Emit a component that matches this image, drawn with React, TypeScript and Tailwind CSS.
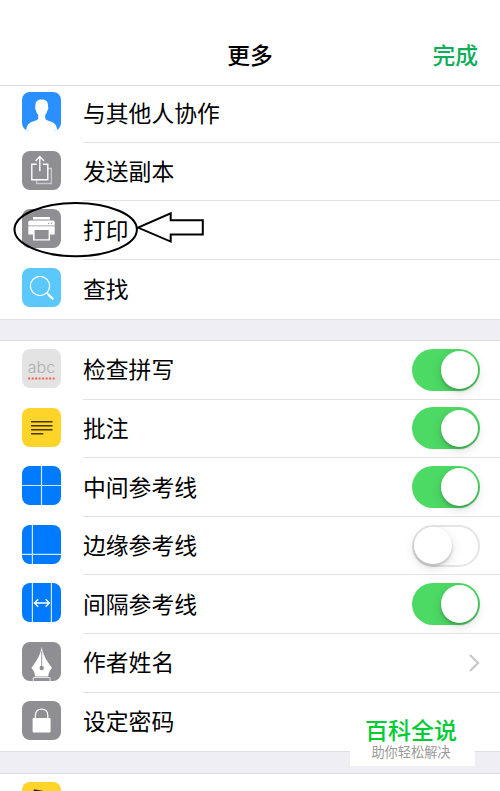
import { ReactNode } from "react";
import clsx from "clsx";

type Item = {
  label: string;
  icon: ReactNode;
  toggle?: boolean;
  chevron?: boolean;
};

function Icon({ className, children }: { className: string; children: ReactNode }) {
  return (
    <svg
      viewBox="0 0 39 39"
      fill="none"
      className={clsx("mb-[3.5px] h-[39px] w-[39px] shrink-0 rounded-[8px]", className)}
    >
      {children}
    </svg>
  );
}

const actions: Item[] = [
  {
    label: "与其他人协作",
    icon: (
      <Icon className="bg-[#2a90ff]">
        <path
          d="M4 39.5C4.6 33 6.5 31 11 29.6C14 28.6 16.2 27.8 16.2 26V22.8C14.6 21.4 14.3 19.8 14 18.2C12.8 17.6 13.1 15.5 13.4 14.5C13.2 10 15 7.6 19.7 7.6C24.4 7.6 26.2 10 26 14.5C26.4 15.5 26.6 17.6 25.4 18.2C25.1 19.8 24.8 21.4 23.2 22.8V26C23.2 27.8 25.4 28.6 28.4 29.6C32.9 31 34.8 33 35.4 39.5Z"
          fill="white"
        />
        <path d="M0 36.5L4.5 39H0ZM39 36.5L34.9 39H39Z" fill="white" />
      </Icon>
    ),
  },
  {
    label: "发送副本",
    icon: (
      <Icon className="bg-[#8e8e93]">
        <path d="M26 17.5H29.4V32.5H14.6V29" stroke="#c9c9cc" strokeWidth="1.3" />
        <path
          d="M14.8 13.2H9.8V28.8H25.8V13.2H20.8M17.8 20.2V5.8M13.6 10L17.8 5.6L22 10"
          stroke="white"
          strokeWidth="1.4"
        />
      </Icon>
    ),
  },
  {
    label: "打印",
    icon: (
      <Icon className="bg-[#8e8e93]">
        <path d="M11 8H28V10.4H11Z" fill="white" />
        <path
          d="M8 11.6H31Q32.7 11.6 32.7 13.3V16.6H6.3V13.3Q6.3 11.6 8 11.6Z"
          fill="white"
        />
        <path d="M6.3 17.3H32.7V25.6H28V31.6H11V25.6H6.3Z" fill="white" />
        <path d="M12.6 21H26.6V30.2H12.6Z" fill="#8e8e93" />
        <path d="M26 14.3H27.2M28.8 14.3H30" stroke="#8e8e93" />
      </Icon>
    ),
  },
  {
    label: "查找",
    icon: (
      <Icon className="bg-[#5ac8fa]">
        <circle cx="18" cy="18" r="9.6" stroke="white" strokeWidth="1.2" />
        <path d="M24.8 24.8L26.4 26.4" stroke="white" strokeWidth="1.2" />
        <path d="M25.8 26L31.2 31.4" stroke="white" strokeWidth="2.3" />
      </Icon>
    ),
  },
];

const settings: Item[] = [
  {
    label: "检查拼写",
    toggle: true,
    icon: (
      <Icon className="bg-[#e3e3e3]">
        <text
          x="19.5"
          y="23.5"
          textAnchor="middle"
          className="fill-[#adadad] font-['Inter','Liberation_Sans',sans-serif] text-[16px] font-light"
        >
          abc
        </text>
        <path d="M6.2 29.5H33" stroke="#ff5540" strokeWidth="2" strokeDasharray="1.9 1.6" />
      </Icon>
    ),
  },
  {
    label: "批注",
    toggle: true,
    icon: (
      <Icon className="bg-[#ffd428]">
        <path
          d="M9 13.8H30.5M9 17.8H30.5M9 21.8H30.5M9 25.8H21.3"
          stroke="#43390b"
          strokeWidth="1.5"
        />
      </Icon>
    ),
  },
  {
    label: "中间参考线",
    toggle: true,
    icon: (
      <Icon className="bg-[#007aff]">
        <path d="M19.5 0V39M0 19.5H39" stroke="#d3e7ff" strokeWidth="1.2" />
      </Icon>
    ),
  },
  {
    label: "边缘参考线",
    toggle: false,
    icon: (
      <Icon className="bg-[#007aff]">
        <path d="M10.4 0V39M0 29.4H39" stroke="#d3e7ff" strokeWidth="1.2" />
      </Icon>
    ),
  },
  {
    label: "间隔参考线",
    toggle: true,
    icon: (
      <Icon className="bg-[#007aff]">
        <path d="M10.4 0V39M29.4 0V39" stroke="#d3e7ff" strokeWidth="1.2" />
        <path
          d="M12.6 20H27.2M16.2 16.2L12.4 20L16.2 23.8M23.6 16.2L27.4 20L23.6 23.8"
          stroke="white"
          strokeWidth="1.3"
        />
      </Icon>
    ),
  },
  {
    label: "作者姓名",
    chevron: true,
    icon: (
      <Icon className="bg-[#8e8e93]">
        <path
          d="M19.7 4.8C20.6 12 24.5 19 30 25.8C27.5 29 26.6 31 26.2 34.4H13.2C12.8 31 11.9 29 9.4 25.8C14.9 19 18.8 12 19.7 4.8Z"
          fill="white"
        />
        <path d="M19.7 9V25" stroke="#8e8e93" strokeWidth="0.9" />
        <circle cx="19.7" cy="26" r="2.2" fill="#8e8e93" />
        <path d="M11.3 39.5V35.6H28V39.5" stroke="#e8e8e9" />
      </Icon>
    ),
  },
  {
    label: "设定密码",
    icon: (
      <Icon className="bg-[#8e8e93]">
        <path d="M13.4 18V14.2C13.4 6 25.8 6 25.8 14.2V18" stroke="white" strokeWidth="1.3" />
        <rect x="10.6" y="17" width="18" height="14.4" rx="0.8" fill="white" />
      </Icon>
    ),
  },
];

const more: Item[] = [
  {
    label: "",
    icon: (
      <Icon className="bg-[#ffd428]">
        <path d="M11.4 10.5L12.6 8L25.5 10.4L24 20" stroke="#2b2508" strokeWidth="1.3" />
      </Icon>
    ),
  },
];

function Toggle({ on }: { on: boolean }) {
  return (
    <span
      className={clsx(
        "flex h-[42px] w-[68px] shrink-0 items-center rounded-full",
        on ? "justify-end bg-[#4cd964] pr-[2px]" : "border-2 border-[#e5e5e5] bg-white"
      )}
    >
      <span className="h-[37.5px] w-[37.5px] shrink-0 rounded-full bg-white shadow-[0_2px_3px_rgba(0,0,0,0.2),0_4px_12px_rgba(0,0,0,0.12)]" />
    </span>
  );
}

function Section({ items, className }: { items: Item[]; className?: string }) {
  return (
    <ul className={clsx("bg-white", className)}>
      {items.map((item, i) => (
        <li key={item.label} className="flex h-[58.6px] items-center pl-[22px]">
          {item.icon}
          <div
            className={clsx(
              "ml-[22px] flex h-full grow items-center justify-between pr-5",
              i < items.length - 1 && "border-b border-[#e2e2e4]"
            )}
          >
            <span className="text-[22.8px] leading-none">{item.label}</span>
            {item.toggle !== undefined && <Toggle on={item.toggle} />}
            {item.chevron && (
              <svg viewBox="0 0 11 18" fill="none" className="h-[18px] w-[11px]">
                <path d="M1 1L9 9L1 17" stroke="#c7c7cc" strokeWidth="2.2" />
              </svg>
            )}
          </div>
        </li>
      ))}
    </ul>
  );
}

export default function App() {
  return (
    <div className="relative h-[791px] w-[500px] overflow-hidden bg-[#efeef4] font-['Noto_Sans_CJK_SC',sans-serif] text-black">
      <header className="relative z-10 grid h-[86px] grid-cols-3 items-end border-b border-[#dcdcdd] bg-white px-[22px] pb-[18px] text-[22.8px] leading-[24px] font-medium">
        <h1 className="col-start-2 text-center">更多</h1>
        <button className="text-right text-[#0fae58]">完成</button>
      </header>

      <Section items={actions} className="-mt-[1.8px] border-b border-[#e0e0e4]" />
      <Section items={settings} className="mt-[20.4px] border-y border-[#dedee2]" />
      <Section items={more} className="mt-[20.4px] border-t border-[#dedee2]" />

      {/* hand-drawn callout around the print row */}
      <svg
        viewBox="0 0 200 60"
        fill="none"
        stroke="black"
        strokeWidth="2"
        className="absolute top-[200px] left-[10px] h-[60px] w-[200px]"
      >
        <ellipse cx="65.7" cy="29.6" rx="61.2" ry="26.6" />
        <path d="M128 27.6L160.7 13.3V20.2H192.8V34.6H160.7V41.6Z" />
      </svg>

      <div className="absolute top-[714px] left-[350px] flex h-[52px] w-[125px] flex-col items-center bg-white pt-[3px] pr-[3px]">
        <span className="text-[23px] leading-[24px] font-medium text-[#0c3]">百科全说</span>
        <span className="mt-[3px] text-[13.2px] leading-[16px] text-[#999]">助你轻松解决</span>
      </div>
    </div>
  );
}
